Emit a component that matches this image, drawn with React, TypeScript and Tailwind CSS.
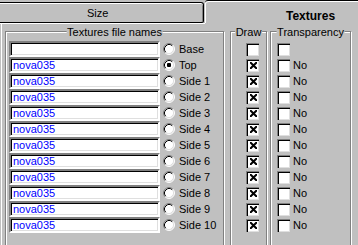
import React from "react";

const rows = [
  { label: "Base", file: "", draw: false, no: false, sel: false },
  { label: "Top", file: "nova035", draw: true, no: true, sel: true },
  ...Array.from({ length: 10 }, (_, i) => ({
    label: `Side ${i + 1}`,
    file: "nova035",
    draw: true,
    no: true,
    sel: false,
  })),
];

function Radio({ on }: { on: boolean }) {
  return (
    <svg width="12" height="12" viewBox="0 0 12 12" className="shrink-0">
      <circle cx="6" cy="6" r="5" fill="#fff" />
      <path d="M2.11 9.89 A5.5 5.5 0 0 1 9.89 2.11" fill="none" stroke="#808080" strokeWidth="1" />
      <path d="M9.89 2.11 A5.5 5.5 0 0 1 2.11 9.89" fill="none" stroke="#fff" strokeWidth="1" />
      <path d="M2.82 9.18 A4.5 4.5 0 0 1 9.18 2.82" fill="none" stroke="#000" strokeWidth="1" />
      <path d="M9.18 2.82 A4.5 4.5 0 0 1 2.82 9.18" fill="none" stroke="#dfdfdf" strokeWidth="1" />
      {on && <rect x="4" y="4" width="4" height="4" rx="1" fill="#000" />}
    </svg>
  );
}

function Check({ on }: { on: boolean }) {
  return (
    <div className="w-[13px] h-[13px] shrink-0 bg-white border-t border-l border-[#808080] border-r-white border-b-white shadow-[inset_1px_1px_0_#000,inset_-1px_-1px_0_#dfdfdf] flex items-center justify-center">
      {on && (
        <svg width="7" height="7" viewBox="0 0 7 7">
          <path d="M0.5 0.5 L6.5 6.5 M6.5 0.5 L0.5 6.5" stroke="#000" strokeWidth="2" strokeLinecap="square" />
        </svg>
      )}
    </div>
  );
}

function Group({
  title,
  className,
  children,
}: {
  title: string;
  className: string;
  children: React.ReactNode;
}) {
  return (
    <div
      className={`relative h-[230px] shrink-0 border border-[#808080] shadow-[inset_1px_1px_0_#fff,1px_1px_0_#fff] ${className}`}
    >
      <div className="absolute -top-[6px] left-1/2 -translate-x-1/2 bg-[#c0c0c0] px-px leading-[13px] whitespace-nowrap">
        {title}
      </div>
      {children}
    </div>
  );
}

export default function App() {
  return (
    <div className="w-[358px] h-[245px] overflow-hidden bg-[#c0c0c0] text-[11px] text-black font-['Liberation_Sans',Arial,sans-serif]">
      <div className="flex h-[23px] items-end">
        <div className="h-[21px] w-[204px] shrink-0 border-t border-r border-b border-black rounded-tr-[3px] rounded-br-[2px] shadow-[inset_0_1px_0_#fff,inset_-1px_0_0_#808080] pl-[87px] pt-[4px] leading-[13px]">
          Size
        </div>
        <div className="h-[23px] flex-1 ml-px border-t border-black rounded-tl-[3px] shadow-[inset_1px_1px_0_#fff] pl-[81px] pt-[8px] leading-[14px] text-[12px] font-bold">
          Textures
        </div>
      </div>
      <div className="flex">
        <div className="h-px w-[205px] bg-white" />
      </div>
      <div className="ml-px h-[221px] border-l border-white pl-[3px] pt-[7px] flex">
        <Group title="Textures file names" className="w-[219px] pl-[3px] pt-[9px]">
          {rows.map((r) => (
            <div key={r.label} className="flex h-[16px] items-center">
              <div className="h-[16px] w-[151px] shrink-0 bg-white border-2 border-t-[#808080] border-l-[#808080] border-r-white border-b-white shadow-[inset_1px_1px_0_#000,inset_-1px_-1px_0_#dfdfdf] pl-[2px] leading-[12px] text-[#0000ff]">
                {r.file}
              </div>
              <div className="ml-[3px]">
                <Radio on={r.sel} />
              </div>
              <span className="ml-[4px] leading-[13px]">{r.label}</span>
            </div>
          ))}
        </Group>
        <Group title="Draw" className="ml-[6px] w-[37px] pl-[15px] pt-[9px]">
          {rows.map((r) => (
            <div key={r.label} className="flex h-[16px] items-center">
              <Check on={r.draw} />
            </div>
          ))}
        </Group>
        <Group title="Transparency" className="ml-[3px] w-[81px] pl-[6px] pt-[9px]">
          {rows.map((r) => (
            <div key={r.label} className="flex h-[16px] items-center">
              <Check on={false} />
              {r.no && <span className="ml-[3px] leading-[13px]">No</span>}
            </div>
          ))}
        </Group>
      </div>
    </div>
  );
}
